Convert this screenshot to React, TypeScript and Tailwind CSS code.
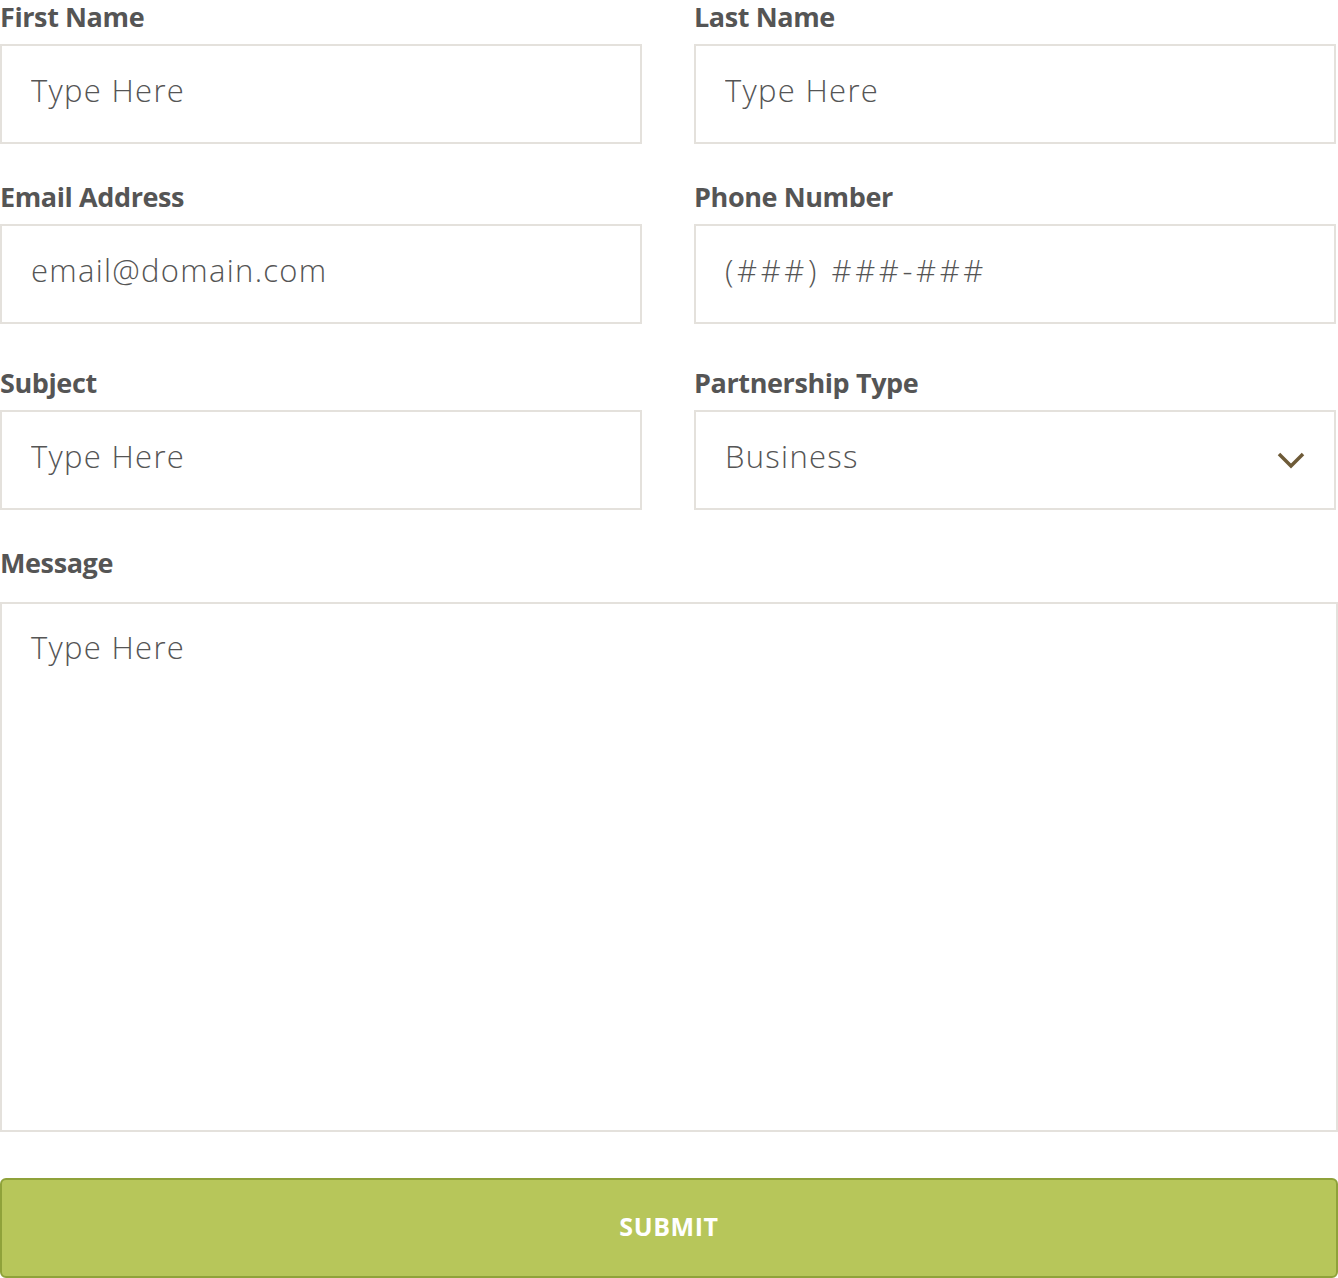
import React from 'react';

const Label: React.FC<{ children: React.ReactNode }> = ({ children }) => (
  <label className="block h-[44px] text-[27px] leading-[34px] font-bold text-[#555555] tracking-[-0.4px]">{children}</label>
);

const Field: React.FC<{ label: string; placeholder: string; wide?: boolean }> = ({ label, placeholder, wide }) => (
  <div>
    <Label>{label}</Label>
    <input
      placeholder={placeholder}
      className={`block w-full h-[100px] border-2 border-[#e4e1dc] bg-white px-[29px] pb-[8px] text-[31px] font-light text-[#555555] placeholder:text-[#555555] outline-none ${wide ? 'tracking-[3.6px]' : 'tracking-[1.3px]'}`}
    />
  </div>
);

export default function App() {
  return (
    <div className="w-[1338px] bg-white font-['Open_Sans',sans-serif]">
      <div className="grid grid-cols-[642px_642px] gap-x-[52px]">
        <Field label="First Name" placeholder="Type Here" />
        <Field label="Last Name" placeholder="Type Here" />
      </div>
      <div className="grid grid-cols-[642px_642px] gap-x-[52px] mt-[36px]">
        <Field label="Email Address" placeholder="email@domain.com" />
        <Field label="Phone Number" placeholder="(###) ###-###" wide />
      </div>
      <div className="grid grid-cols-[642px_642px] gap-x-[52px] mt-[42px]">
        <Field label="Subject" placeholder="Type Here" />
        <div>
          <Label>Partnership Type</Label>
          <div className="relative">
            <select className="block w-full h-[100px] appearance-none border-2 border-[#e4e1dc] bg-white px-[29px] pb-[8px] text-[31px] font-light tracking-[1.3px] text-[#555555] outline-none">
              <option>Business</option>
              <option>Individual</option>
            </select>
            <svg className="pointer-events-none absolute right-[30px] top-[40px]" width="30" height="20" viewBox="0 0 30 20" fill="none">
              <path d="M3 4 L15 16 L27 4" stroke="#6e5b38" strokeWidth="3.5" />
            </svg>
          </div>
        </div>
      </div>
      <div className="mt-[36px]">
        <label className="block h-[56px] text-[27px] leading-[34px] font-bold text-[#555555] tracking-[-0.4px]">Message</label>
        <textarea
          placeholder="Type Here"
          className="block w-full h-[530px] resize-none border-2 border-[#e4e1dc] bg-white px-[29px] pt-[23px] text-[31px] leading-[40px] font-light tracking-[1.3px] text-[#555555] placeholder:text-[#555555] outline-none"
        />
      </div>
      <button className="mt-[46px] block w-full h-[100px] rounded-[6px] border-2 border-[#8fa23a] bg-[#b7c65a] pb-[2px] text-[25px] font-bold text-white tracking-[0.6px]">
        SUBMIT
      </button>
    </div>
  );
}
